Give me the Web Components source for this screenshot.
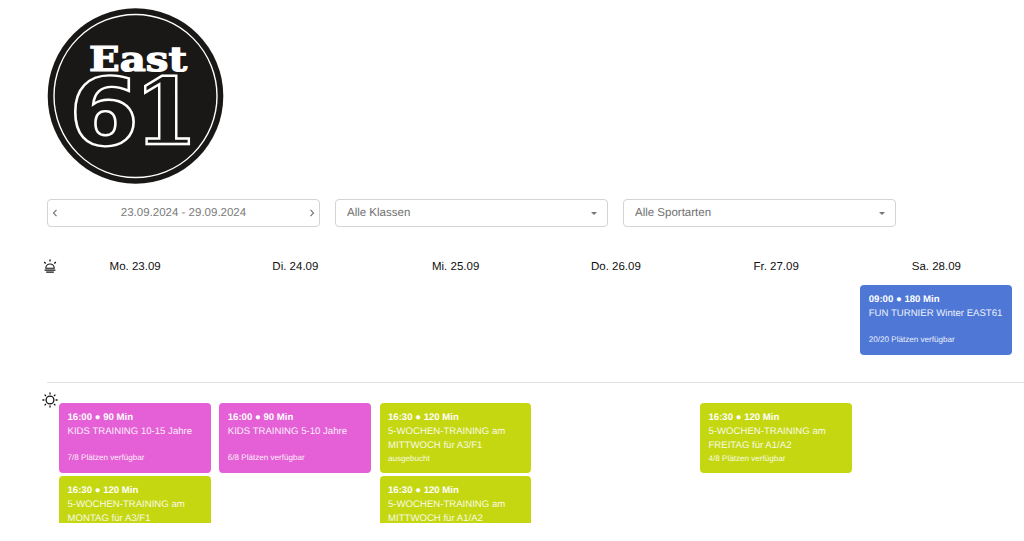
<!DOCTYPE html>
<html lang="de">
<head>
<meta charset="utf-8">
<title>East61</title>
<style>
  html, body { margin: 0; height: 100%; background: #fff; overflow: hidden; }
  body { font-family: "Liberation Sans", Arial, sans-serif; text-rendering: geometricPrecision; }
</style>
</head>
<body>
<booking-app>
  <brand-logo></brand-logo>
  <filter-bar>
    <date-range>23.09.2024 - 29.09.2024</date-range>
    <select-box>Alle Klassen</select-box>
    <select-box>Alle Sportarten</select-box>
  </filter-bar>
  <week-schedule></week-schedule>
</booking-app>

<script>
// Data for the visible week
const DAYS = ["Mo. 23.09", "Di. 24.09", "Mi. 25.09", "Do. 26.09", "Fr. 27.09", "Sa. 28.09"];

const GREEN = "#c5d711";
const PINK = "#e55fd6";
const BLUE = "#4e77d6";

// each part of the day holds one list of events per weekday
const MORNING = [[], [], [], [], [], [
  { head: "09:00 ● 180 Min", title: "FUN TURNIER Winter EAST61", seats: "20/20 Plätzen verfügbar", color: BLUE },
]];

const AFTERNOON = [
  [
    { head: "16:00 ● 90 Min", title: "KIDS TRAINING 10-15 Jahre", seats: "7/8 Plätzen verfügbar", color: PINK },
    { head: "16:30 ● 120 Min", title: "5-WOCHEN-TRAINING am MONTAG für A3/F1", seats: "", color: GREEN },
  ],
  [
    { head: "16:00 ● 90 Min", title: "KIDS TRAINING 5-10 Jahre", seats: "6/8 Plätzen verfügbar", color: PINK },
  ],
  [
    { head: "16:30 ● 120 Min", title: "5-WOCHEN-TRAINING am MITTWOCH für A3/F1", seats: "ausgebucht", color: GREEN },
    { head: "16:30 ● 120 Min", title: "5-WOCHEN-TRAINING am MITTWOCH für A1/A2", seats: "", color: GREEN },
  ],
  [],
  [
    { head: "16:30 ● 120 Min", title: "5-WOCHEN-TRAINING am FREITAG für A1/A2", seats: "4/8 Plätzen verfügbar", color: GREEN },
  ],
  [],
];

const MOON_ICON = `<svg width="16" height="16" viewBox="0 0 16 16" fill="none" stroke="#111" stroke-width="1.1">
  <path d="M3.8 10.2a4.2 4.2 0 0 1 8.4 0z"/>
  <path d="M2.6 12.2h10.8M4.2 14.2h7.6" stroke-width="1.2"/>
  <path d="M8 1.6v2M2.2 4l1.5 1.5M13.8 4l-1.5 1.5" stroke-width="1.3"/>
</svg>`;

const SUN_ICON = `<svg width="16" height="16" viewBox="0 0 16 16" fill="none" stroke="#111" stroke-width="1.3">
  <circle cx="8" cy="8" r="3.9"/>
  <path d="M8 .4v2M8 13.6v2M.4 8h2M13.6 8h2M2.6 2.6l1.4 1.4M12 12l1.4 1.4M13.4 2.6L12 4M4 12l-1.4 1.4"/>
</svg>`;

class BookingApp extends HTMLElement {
  constructor() {
    super();
    this.attachShadow({ mode: "open" });
    this.shadowRoot.innerHTML = `
      <style>
        :host { display: flex; flex-direction: column; height: 523px; overflow: hidden; padding-top: 8px; box-sizing: border-box; }
      </style>
      <slot></slot>`;
  }
}

class BrandLogo extends HTMLElement {
  constructor() {
    super();
    this.attachShadow({ mode: "open" });
    this.shadowRoot.innerHTML = `
      <style>
        :host { display: block; margin-left: 47px; width: 178px; height: 176px; }
        svg { display: block; }
      </style>
      <svg width="178" height="176" viewBox="0 0 178 176">
        <circle cx="88.5" cy="88" r="87.8" fill="#1a1817"/>
        <circle cx="88.5" cy="88" r="81.5" fill="none" stroke="#fff" stroke-width="1.4"/>
        <text x="22" y="137" font-family="'DejaVu Sans'" font-weight="700" font-size="94"
          textLength="70" lengthAdjust="spacingAndGlyphs" fill="#1a1817" stroke="#fff" stroke-width="2.4">6</text>
        <text x="87" y="136" font-family="'DejaVu Serif'" font-weight="700" font-size="92"
          fill="#1a1817" stroke="#fff" stroke-width="2.4">1</text>
        <text x="42" y="63" font-family="'DejaVu Serif'" font-weight="700" font-size="34"
          textLength="98" lengthAdjust="spacingAndGlyphs" fill="#fff" stroke="#fff" stroke-width="1.2">East</text>
      </svg>`;
  }
}

class FilterBar extends HTMLElement {
  constructor() {
    super();
    this.attachShadow({ mode: "open" });
    this.shadowRoot.innerHTML = `
      <style>
        :host { display: flex; gap: 15px; margin: 15px 0 0 47px; }
      </style>
      <slot></slot>`;
  }
}

class DateRange extends HTMLElement {
  constructor() {
    super();
    this.attachShadow({ mode: "open" });
    this.shadowRoot.innerHTML = `
      <style>
        :host {
          display: flex; align-items: center; justify-content: space-between;
          width: 273px; height: 28px; box-sizing: border-box; padding: 0 4px;
          border: 1px solid #d4d4d4; border-radius: 4px;
          color: #7a7a7a; font-size: 11.5px;
        }
        span { margin-top: -1px; }
        svg { display: block; }
      </style>
      <svg width="6" height="8" viewBox="0 0 6 8" fill="none" stroke="#777" stroke-width="1.2"><path d="M4.5 .8L1.5 4l3 3.2"/></svg>
      <span><slot></slot></span>
      <svg width="6" height="8" viewBox="0 0 6 8" fill="none" stroke="#777" stroke-width="1.2"><path d="M1.5 .8L4.5 4l-3 3.2"/></svg>`;
  }
}

class SelectBox extends HTMLElement {
  constructor() {
    super();
    this.attachShadow({ mode: "open" });
    this.shadowRoot.innerHTML = `
      <style>
        :host {
          display: flex; align-items: center; justify-content: space-between;
          width: 273px; height: 28px; box-sizing: border-box; padding: 0 10px 0 11px;
          border: 1px solid #d4d4d4; border-radius: 4px;
          color: #6f6f6f; font-size: 11.5px;
        }
        span { margin-top: -1px; }
        i { width: 0; height: 0; border: 3px solid transparent; border-top-color: #777; border-bottom: 0; }
      </style>
      <span><slot></slot></span>
      <i></i>`;
  }
}

class EventCard extends HTMLElement {
  constructor() {
    super();
    this.attachShadow({ mode: "open" });
    this.shadowRoot.innerHTML = `
      <style>
        :host {
          display: flex; flex-direction: column; height: 69.5px; box-sizing: border-box;
          padding: 8px 6px 0 8.5px; border-radius: 4px; color: #fff; overflow: hidden;
          background: var(--card-color);
        }
        .head { font-size: 9.6px; font-weight: 700; line-height: 13px; }
        .title { font-size: 9.6px; line-height: 14px; margin-top: 1.4px; flex: 1; opacity: .9; }
        .seats { font-size: 8.1px; line-height: 11px; margin-bottom: 10px; opacity: .9; }
      </style>
      <div class="head"><slot name="head"></slot></div>
      <div class="title"><slot name="title"></slot></div>
      <div class="seats"><slot name="seats"></slot></div>`;
  }
}

class WeekSchedule extends HTMLElement {
  constructor() {
    super();
    this.attachShadow({ mode: "open" });
    this.shadowRoot.innerHTML = `
      <style>
        :host { display: block; margin-top: 31px; }
        .row { display: grid; grid-template-columns: 13px repeat(6, 160.25px); margin-left: 42px; }
        .days { height: 16px; align-items: center; font-size: 11.5px; color: #111; text-align: center; }
        .days .label { padding-top: 1px; }
        .icon { align-self: start; width: 16px; height: 16px; }
        .days .icon { align-self: center; }
        .morning { height: 108px; padding-top: 11px; box-sizing: border-box; }
        .afternoon { border-top: 1px solid #e2e2e2; margin-left: 47px; grid-template-columns: 8px repeat(6, 160.25px); padding-top: 20px; position: relative; }
        .afternoon .icon { position: absolute; left: -5.5px; top: 9px; }
        .cell { display: flex; flex-direction: column; gap: 3.5px; padding: 0 4.5px 0 4px; }
        svg { display: block; }
      </style>
      <div class="row days">
        <div class="icon">${MOON_ICON}</div>
        ${DAYS.map((day) => `<div class="label">${day}</div>`).join("")}
      </div>
      <div class="row morning">${this.renderCells(MORNING)}</div>
      <div class="row afternoon">
        ${this.renderCells(AFTERNOON)}
        <div class="icon">${SUN_ICON}</div>
      </div>`;
  }

  renderCells(columns) {
    return `<div></div>` + columns.map((events) => `
      <div class="cell">
        ${events.map((e) => `
          <event-card style="--card-color:${e.color}">
            <span slot="head">${e.head}</span>
            <span slot="title">${e.title}</span>
            <span slot="seats">${e.seats}</span>
          </event-card>`).join("")}
      </div>`).join("");
  }
}

customElements.define("booking-app", BookingApp);
customElements.define("brand-logo", BrandLogo);
customElements.define("filter-bar", FilterBar);
customElements.define("date-range", DateRange);
customElements.define("select-box", SelectBox);
customElements.define("event-card", EventCard);
customElements.define("week-schedule", WeekSchedule);
</script>
</body>
</html>
